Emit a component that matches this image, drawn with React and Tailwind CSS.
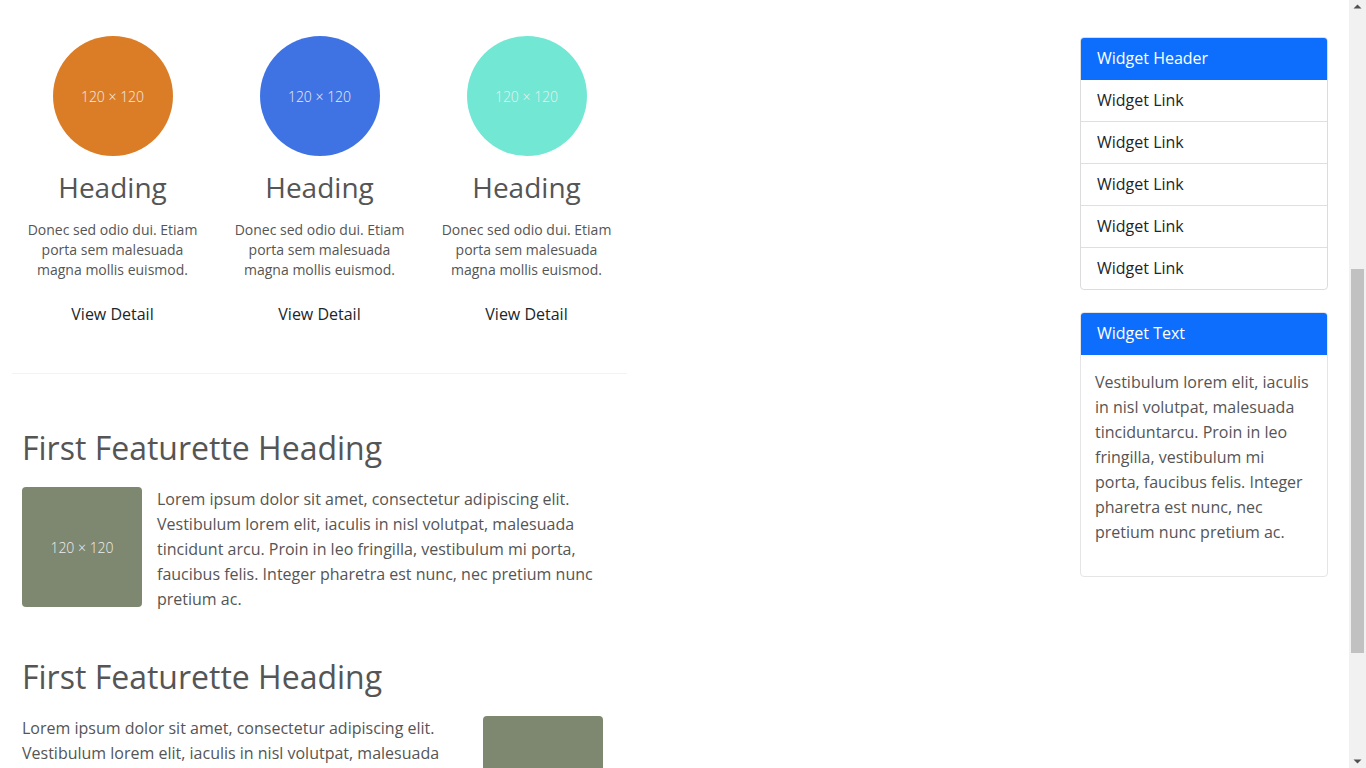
import React from "react";

const circles = [
  { color: "bg-[#db7d26]" },
  { color: "bg-[#3f73e3]" },
  { color: "bg-[#71e7d4]" },
];

const lorem =
  "Lorem ipsum dolor sit amet, consectetur adipiscing elit. Vestibulum lorem elit, iaculis in nisl volutpat, malesuada tincidunt arcu. Proin in leo fringilla, vestibulum mi porta, faucibus felis. Integer pharetra est nunc, nec pretium nunc pretium ac.";

const Placeholder = ({ className }) => (
  <div
    className={`w-[120px] h-[120px] shrink-0 flex items-center justify-center text-[14px] font-light text-[#eeeeee] ${className}`}
  >
    120 × 120
  </div>
);

// classic browser scrollbar as it shows in the screenshot
const ScrollBar = () => (
  <div className="w-[17px] shrink-0 h-screen bg-[#f1f1f1] flex flex-col items-center">
    <svg width="17" height="17" viewBox="0 0 17 17">
      <path d="M4.5 8.5 L8.5 4.5 L12.5 8.5 Z" fill="#505050" />
    </svg>
    <div className="flex-1 w-full">
      <div className="mt-[252px] mx-[2px] h-[384px] bg-[#c1c1c1]" />
    </div>
    <svg width="17" height="17" viewBox="0 0 17 17">
      <path d="M4.5 8.5 L12.5 8.5 L8.5 12.5 Z" fill="#505050" />
    </svg>
  </div>
);

const App = () => {
  return (
    <div className="flex h-screen bg-white text-[#555555] font-['Open_Sans',sans-serif]">
      <div className="flex-1 overflow-y-auto">
        <div className="flex justify-between pl-[9px] pr-[21px] pt-[36px] pb-[120px]">
          {/* MAIN */}
          <div className="w-[621px]">
            {/* CIRCLES */}
            <div className="grid grid-cols-3">
              {circles.map((c, i) => (
                <div key={i} className="flex flex-col items-center text-center px-3">
                  <Placeholder className={`rounded-full ${c.color}`} />
                  <h2 className="mt-[14px] text-[28px] leading-[34px] font-normal text-[#555555]">
                    Heading
                  </h2>
                  <p className="mt-[16px] text-[14px] leading-[20px]">
                    Donec sed odio dui. Etiam porta sem malesuada magna mollis euismod.
                  </p>
                  <a className="mt-[22px] text-[16px] leading-[24px] text-[#212529]">
                    View Detail
                  </a>
                </div>
              ))}
            </div>

            <hr className="mt-[47px] mx-[3px] border-0 border-t border-[#f3f3f3]" />

            {/* FEATURETTE 1 */}
            <div className="pl-[13px] pr-3 mt-[55px]">
              <h2 className="text-[32px] leading-[38px] font-normal text-[#555555]">
                First Featurette Heading
              </h2>
              <div className="flex gap-[15px] mt-[20px] w-[581px]">
                <Placeholder className="rounded bg-[#7e876f]" />
                <p className="text-[16px] leading-[25px]">{lorem}</p>
              </div>
            </div>

            {/* FEATURETTE 2 */}
            <div className="pl-[13px] pr-3 mt-[46px]">
              <h2 className="text-[32px] leading-[38px] font-normal text-[#555555]">
                First Featurette Heading
              </h2>
              <div className="flex gap-[15px] mt-[20px] w-[581px]">
                <p className="text-[16px] leading-[25px]">{lorem}</p>
                <Placeholder className="rounded bg-[#7e876f]" />
              </div>
            </div>

            <hr className="mt-[47px] mx-[3px] border-0 border-t border-[#f3f3f3]" />

            {/* FEATURETTE 3 */}
            <div className="pl-[13px] pr-3 mt-[55px]">
              <h2 className="text-[32px] leading-[38px] font-normal text-[#555555]">
                First Featurette Heading
              </h2>
              <div className="flex gap-[15px] mt-[20px] w-[581px]">
                <Placeholder className="rounded bg-[#7e876f]" />
                <p className="text-[16px] leading-[25px]">{lorem}</p>
              </div>
            </div>
          </div>

          {/* SIDEBAR */}
          <div className="w-[248px] pt-[1px]">
            <div className="border border-[#dcdcdc] rounded overflow-hidden">
              <div className="bg-[#0d6efd] text-white px-4 py-2 text-[16px] leading-[25px] border-b border-[#0d6efd]">
                Widget Header
              </div>
              {[0, 1, 2, 3, 4].map((i) => (
                <a
                  key={i}
                  className={`block px-4 py-2 text-[16px] leading-[25px] text-[#212529] ${
                    i > 0 ? "border-t border-[#dfdfdf]" : ""
                  }`}
                >
                  Widget Link
                </a>
              ))}
            </div>

            <div className="mt-[22px] border border-[#e5e5e5] rounded overflow-hidden">
              <div className="bg-[#0d6efd] text-white px-4 py-2 text-[16px] leading-[25px] border-b border-[#0d6efd]">
                Widget Text
              </div>
              <p className="px-[14px] pt-[15px] pb-[31px] text-[16px] leading-[25px] text-[#555555]">
                Vestibulum lorem elit, iaculis in nisl volutpat, malesuada tinciduntarcu. Proin
                in leo fringilla, vestibulum mi porta, faucibus felis. Integer pharetra est nunc,
                nec pretium nunc pretium ac.
              </p>
            </div>
          </div>
        </div>
      </div>
      <ScrollBar />
    </div>
  );
};

export default App;
